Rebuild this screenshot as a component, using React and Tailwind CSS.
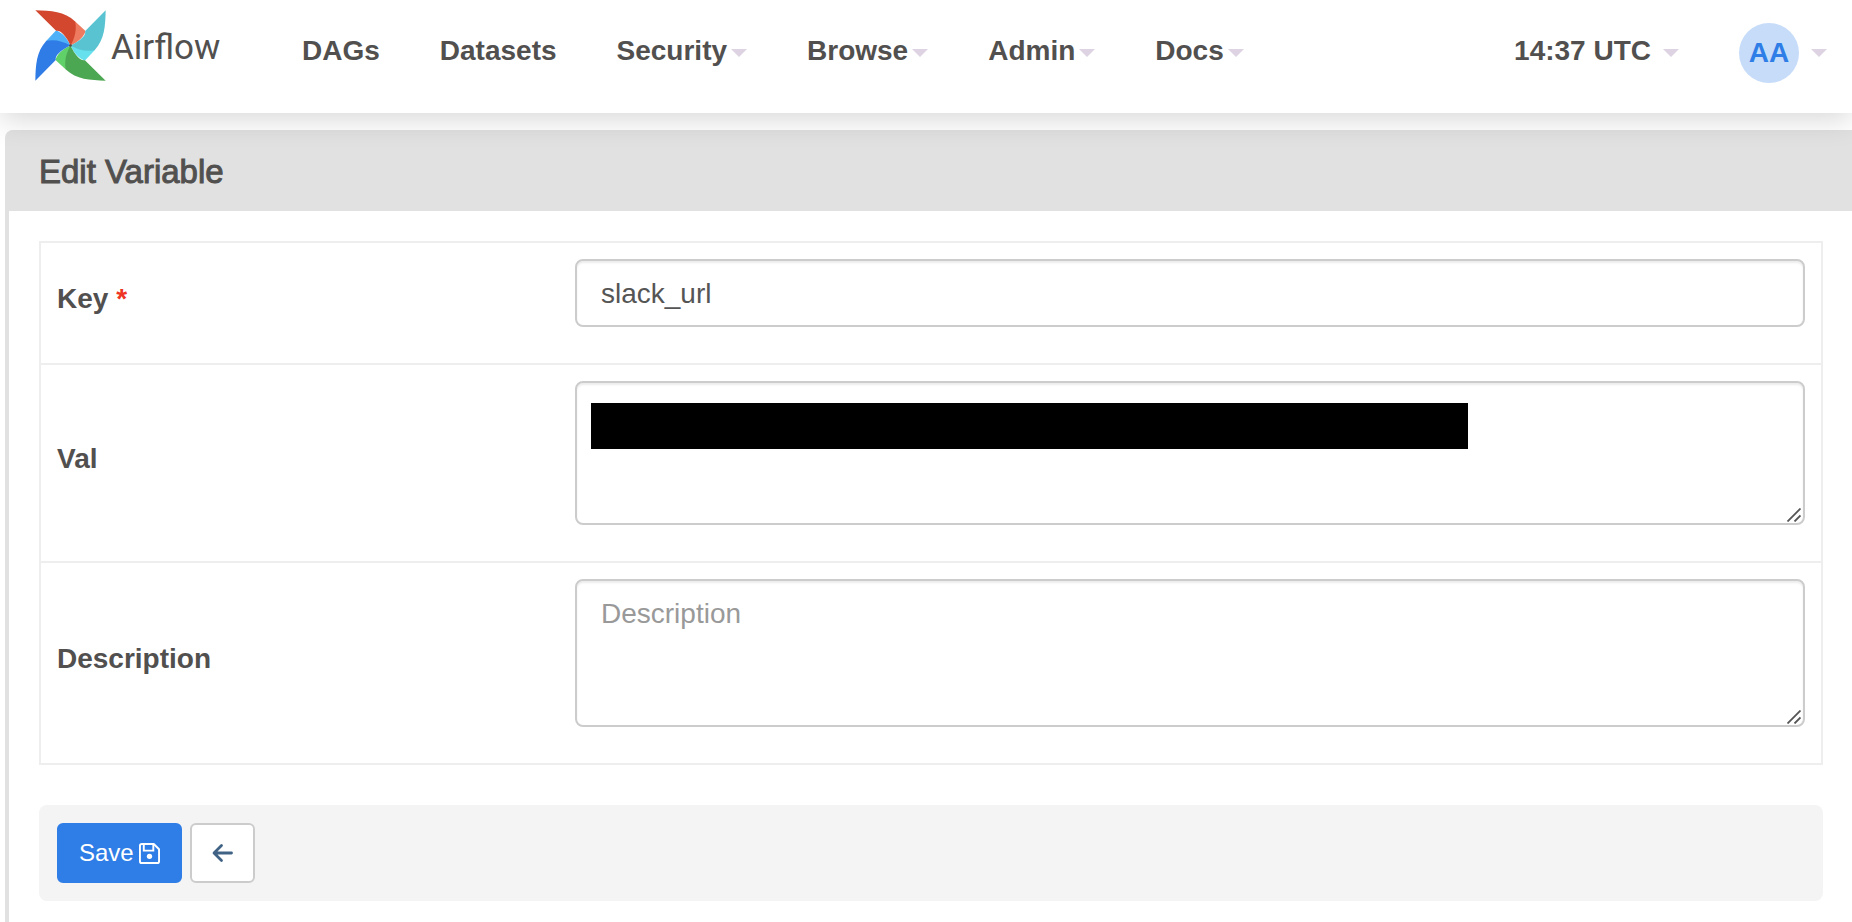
import React from 'react';
import { cva } from 'class-variance-authority';

const NAV_ITEMS = [
  { label: 'DAGs', menu: false },
  { label: 'Datasets', menu: false },
  { label: 'Security', menu: true },
  { label: 'Browse', menu: true },
  { label: 'Admin', menu: true },
  { label: 'Docs', menu: true },
];

// Pinwheel blades, clockwise from the top left one
const BLADES = [
  { angle: 0, dark: '#d2472e', light: '#ee7b5f' },
  { angle: 90, dark: '#59c3d1', light: '#67e0ee' },
  { angle: 180, dark: '#4ca752', light: '#60d069' },
  { angle: 270, dark: '#2f7ce6', light: '#4fb1f7' },
];

const fieldClass =
  'block w-full rounded-lg border-2 border-[#ccc] bg-white px-6 text-[28px] leading-10 text-[#555] shadow-[inset_0_2px_2px_rgba(0,0,0,0.075)] outline-none placeholder:text-[#999]';

const buttonVariants = cva(
  'flex h-[60px] items-center justify-center rounded-md border-2 px-5 text-2xl',
  {
    variants: {
      variant: {
        primary: 'gap-[5px] border-[#2f7de6] bg-[#2f7de6] text-white',
        default: 'border-[#ccc] bg-white text-[#3f6285]',
      },
    },
    defaultVariants: {
      variant: 'default',
    },
  }
);

const Pinwheel = () => (
  <svg className="size-[71px]" viewBox="-106 -106 212 212" aria-hidden="true">
    {BLADES.map(({ angle, light }) => (
      <path
        key={angle}
        transform={`rotate(${angle})`}
        fill={light}
        d="M14 -72 L44 -44 Q46 -41 42 -36 C34 -20 18 -8 0 0 L-4 -30Z"
      />
    ))}
    {BLADES.map(({ angle, dark }) => (
      <path
        key={angle}
        transform={`rotate(${angle})`}
        fill={dark}
        d="M-105 -105 C-58 -104 -18 -102 14 -72 C19 -46 13 -24 0 0 C-8 -18 -20 -34 -30 -41 Q-36 -45 -43 -44Z"
      />
    ))}
    <circle r="4" fill="#51504f" />
  </svg>
);

const Caret = () => (
  <svg className="h-2 w-4" viewBox="0 0 16 8" fill="#ded3e2" aria-hidden="true">
    <path d="M0 0H16L8 8Z" />
  </svg>
);

const SaveIcon = () => (
  <svg className="size-[21px]" viewBox="0 0 22 22" fill="none" stroke="currentColor" strokeWidth="2" aria-hidden="true">
    <path strokeLinejoin="round" d="M3 1H15.5L21 6.5V19Q21 21 19 21H3Q1 21 1 19V3Q1 1 3 1Z" />
    <path d="M5 1.5V8H15V1.5" />
    <circle cx="11" cy="14" r="2.8" fill="currentColor" stroke="none" />
  </svg>
);

const BackIcon = () => (
  <svg className="h-5 w-[21px]" viewBox="0 0 21 20" fill="none" stroke="currentColor" strokeWidth="2.8" strokeLinecap="round" strokeLinejoin="round" aria-hidden="true">
    <path d="M9.5 2.5L2 10L9.5 17.5M2.5 10H19.5" />
  </svg>
);

const ResizeGrip = () => (
  <svg className="pointer-events-none absolute right-1 bottom-[3px] size-3.5" viewBox="0 0 14 14" fill="none" stroke="#555" strokeWidth="1.8" aria-hidden="true">
    <path d="M0.5 13.5L13.5 0.5M7.5 13.5L13.5 7.5" />
  </svg>
);

const NavItem = ({ label, menu }) => {
  if (!menu) {
    return <a href="#" className="pb-1">{label}</a>;
  }
  return (
    <button type="button" aria-haspopup="menu" className="flex items-center gap-1">
      <span className="pb-1">{label}</span>
      <Caret />
    </button>
  );
};

const Header = () => (
  <header className="relative z-10 flex justify-between bg-white pr-[25px] pl-[35px] text-[28px] leading-10 font-bold text-[#51504f] shadow-[0_6px_28px_rgba(0,0,0,0.16)]">
    <div className="flex">
      <a href="#" className="flex w-[267px] items-center gap-[5px] self-start pt-2.5">
        <Pinwheel />
        <span className="pt-1 font-[Roboto,sans-serif] text-[35px] font-normal">Airflow</span>
      </a>
      <nav className="flex items-center gap-[60px] pt-[23px] pb-[30px]">
        {NAV_ITEMS.map((item) => (
          <NavItem key={item.label} {...item} />
        ))}
      </nav>
    </div>
    <div className="flex items-center gap-[60px] pt-[23px] pb-[30px]">
      <button type="button" aria-haspopup="menu" className="flex items-center gap-3">
        <time className="pb-1">14:37 UTC</time>
        <Caret />
      </button>
      <button type="button" aria-haspopup="menu" className="flex items-center gap-3">
        <span className="flex size-[60px] items-center justify-center rounded-full bg-[#c6dcf9] text-[#2f7de6]">
          AA
        </span>
        <Caret />
      </button>
    </div>
  </header>
);

const FormRow = ({ id, label, required, first, children }) => (
  <tr>
    <th
      scope="row"
      className={
        first
          ? 'w-[518px] px-4 pb-2 text-left align-middle'
          : 'border-t-2 border-[#eee] px-4 pb-2 text-left align-middle'
      }
    >
      <label htmlFor={id}>
        {label}
        {required && <span className="text-[#ee3524]"> *</span>}
      </label>
    </th>
    <td className={first ? 'px-4 pt-4 pb-9' : 'border-t-2 border-[#eee] px-4 pt-4 pb-9'}>
      <div className="relative">{children}</div>
    </td>
  </tr>
);

const EditVariableForm = () => (
  <form className="pt-[30px] pr-[29px] pb-5 pl-[30px]" onSubmit={(e) => e.preventDefault()}>
    <table className="w-full border-separate border-spacing-0 border-2 border-[#eee] text-[28px] leading-10">
      <tbody>
        <FormRow id="key" label="Key" required first>
          <input id="key" type="text" defaultValue="slack_url" required className={`${fieldClass} h-[68px] pt-0.5`} />
        </FormRow>
        <FormRow id="val" label="Val">
          <textarea id="val" className={`${fieldClass} h-36 resize-none py-[13px]`} />
          {/* Redacted value */}
          <div className="absolute top-[22px] left-4 h-[46px] w-[877px] max-w-[90%] bg-black" />
          <ResizeGrip />
        </FormRow>
        <FormRow id="description" label="Description">
          <textarea
            id="description"
            placeholder="Description"
            className={`${fieldClass} h-[148px] resize-none py-[13px]`}
          />
          <ResizeGrip />
        </FormRow>
      </tbody>
    </table>

    <div className="mt-10 flex gap-2 rounded-lg bg-[#f4f4f4] p-[18px]">
      <button type="submit" className={buttonVariants({ variant: 'primary' })}>
        Save
        <SaveIcon />
      </button>
      <button type="button" aria-label="Back" className={buttonVariants()}>
        <BackIcon />
      </button>
    </div>
  </form>
);

export default function App() {
  return (
    <div className="flex min-h-screen flex-col bg-white font-['Liberation_Sans',Arial,sans-serif] text-[#51504f]">
      <Header />
      <main className="mt-[17px] ml-[5px] flex-1 rounded-tl-lg border-l-4 border-[#e1e1e1]">
        <h1 className="rounded-tl-sm bg-[#e1e1e1] px-[30px] pt-[22px] pb-[19px] text-[33px] leading-10 [-webkit-text-stroke:1px_#51504f]">
          Edit Variable
        </h1>
        <EditVariableForm />
      </main>
    </div>
  );
}
